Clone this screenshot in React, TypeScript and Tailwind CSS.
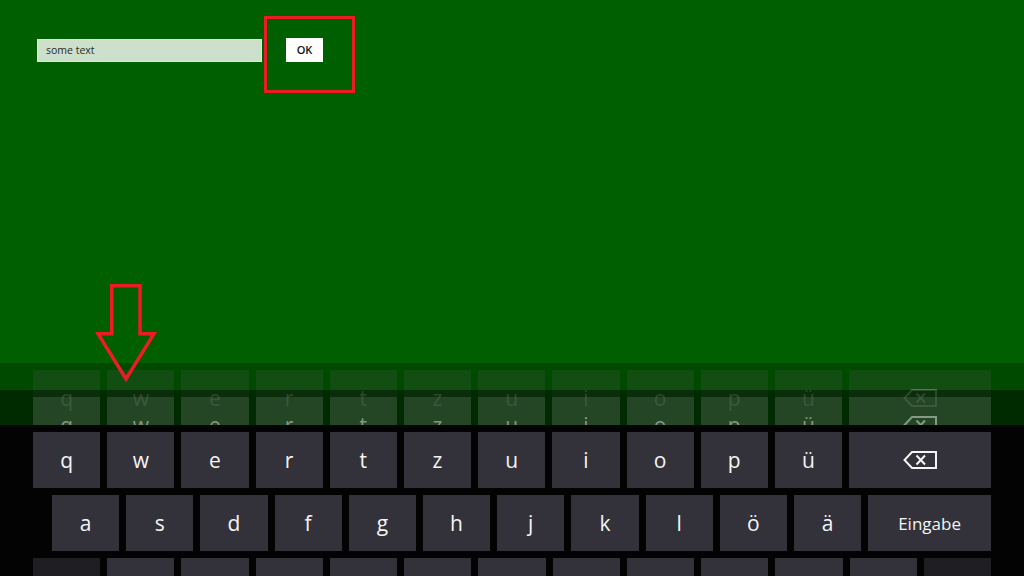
import React from "react";

type Skin = {
  panel: string;
  key: string;
  dark: string;
  label: string;
};

// Three frames of the touch keyboard sliding up: two translucent trails and the settled panel.
const trailFar: Skin = {
  panel: "bg-[rgba(0,0,0,0.22)]",
  key: "bg-[rgba(100,100,100,0.18)]",
  dark: "bg-[rgba(60,60,60,0.18)]",
  label: "text-[rgba(255,255,255,0.26)]",
};

const trailNear: Skin = {
  panel: "bg-[rgba(0,0,0,0.42)]",
  key: "bg-[rgba(100,130,100,0.3)]",
  dark: "bg-[rgba(60,80,60,0.3)]",
  label: "text-[rgba(255,255,255,0.45)]",
};

const settled: Skin = {
  panel: "bg-[#030303]",
  key: "bg-[#33323a]",
  dark: "bg-[#1f1e23]",
  label: "text-[#f4f4f4]",
};

const topRow = ["q", "w", "e", "r", "t", "z", "u", "i", "o", "p", "ü"];
const homeRow = ["a", "s", "d", "f", "g", "h", "j", "k", "l", "ö", "ä"];
const bottomRowCount = 11;

function BackspaceGlyph() {
  return (
    <svg width="34" height="18" viewBox="0 0 34 18" fill="none" stroke="currentColor" strokeWidth="2">
      <path d="M9 1H33V17H9L1.5 9Z" strokeLinejoin="miter" />
      <path d="M13.5 4.5L22 13.5M22 4.5L13.5 13.5" />
    </svg>
  );
}

function Key({
  skin,
  children,
  wide,
  dark,
}: {
  skin: Skin;
  children?: React.ReactNode;
  wide?: string;
  dark?: boolean;
}) {
  return (
    <div
      className={`flex h-[56px] items-center justify-center ${wide ?? "flex-1"} ${dark ? skin.dark : skin.key} ${skin.label}`}
    >
      {children}
    </div>
  );
}

function Keyboard({ skin, top }: { skin: Skin; top: string }) {
  return (
    <div className={`absolute inset-x-0 bottom-0 ${top} ${skin.panel}`}>
      <div className="flex flex-col gap-[7px] pt-[7px] font-['Open_Sans',sans-serif] text-[21px] leading-none">
        <div className="flex w-[991px] gap-[7px] pl-[33px]">
          {topRow.map((k) => (
            <Key key={k} skin={skin}>
              {k}
            </Key>
          ))}
          <Key skin={skin} wide="w-[142px]">
            <BackspaceGlyph />
          </Key>
        </div>
        <div className="flex w-[991px] gap-[7px] pl-[52px]">
          {homeRow.map((k) => (
            <Key key={k} skin={skin}>
              {k}
            </Key>
          ))}
          <Key skin={skin} wide="w-[123px]">
            <span className="text-[17px]">Eingabe</span>
          </Key>
        </div>
        <div className="flex w-[991px] gap-[7px] pl-[33px]">
          <Key skin={skin} dark />
          {Array.from({ length: bottomRowCount }).map((_, i) => (
            <Key key={i} skin={skin} />
          ))}
          <Key skin={skin} dark />
        </div>
      </div>
    </div>
  );
}

export default function App() {
  return (
    <div className="relative h-[576px] w-[1024px] overflow-hidden bg-[#005f00]">
      <div className="flex items-center pl-[37px] pt-[38px]">
        <input
          readOnly
          value="some text"
          className="h-[23px] w-[225px] border border-[#dce8da] bg-[#cde0cb] pl-[8px] font-['Open_Sans',sans-serif] text-[10.5px] text-[#2a2a2a] outline-none"
        />
        <button className="ml-[24px] flex h-[24px] w-[37px] items-center justify-center bg-white font-['Open_Sans',sans-serif] text-[11px] font-semibold text-[#111]">
          OK
        </button>
      </div>

      <Keyboard skin={trailFar} top="top-[363px]" />
      <Keyboard skin={trailNear} top="top-[390px]" />
      <Keyboard skin={settled} top="top-[425px]" />

      {/* callout frame around the button */}
      <div className="absolute left-[264px] top-[16px] h-[77px] w-[91px] border-[3px] border-[#ed1c24]" />

      {/* callout arrow pointing at the keyboard */}
      <svg
        className="absolute left-0 top-0"
        width="200"
        height="400"
        viewBox="0 0 200 400"
        fill="none"
      >
        <polygon
          points="111.75,285.75 140,285.75 140,333.75 154,333.75 126,379 98,333.75 111.75,333.75"
          stroke="#ed1c24"
          strokeWidth="3.5"
          strokeLinejoin="miter"
          strokeMiterlimit="10"
        />
      </svg>
    </div>
  );
}
